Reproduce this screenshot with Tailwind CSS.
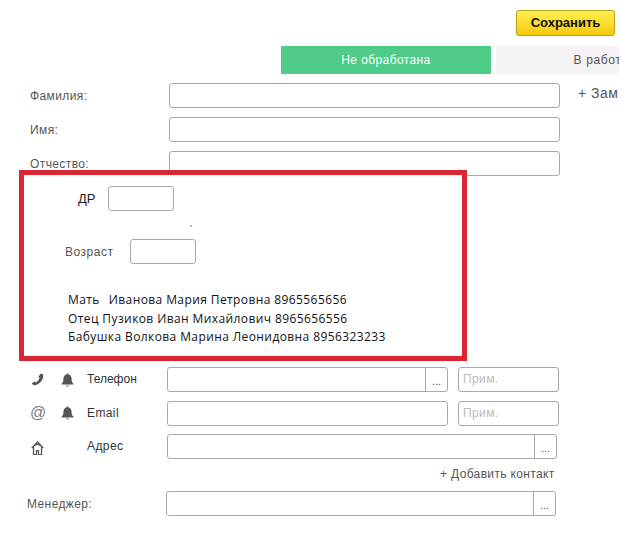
<!DOCTYPE html>
<html lang="ru">
<head>
    <meta charset="UTF-8">
    <title>Карточка клиента</title>
    <script src="https://cdn.jsdelivr.net/npm/@tailwindcss/browser@4"></script>
</head>
<body class="bg-white">
    <div class="w-[622px] h-[537px] overflow-hidden font-['Liberation_Sans',sans-serif] text-[12px] text-[#555]">
        <!-- Save -->
        <div class="pt-[10px] pl-[516px]">
            <button class="w-[99px] h-[26px] rounded-[3px] border border-[#b9a21a] bg-gradient-to-b from-[#fff04a] to-[#f6c800] text-[13px] font-bold text-[#111]">Сохранить</button>
        </div>

        <!-- Status tabs -->
        <div class="flex w-[619px] mt-[10px] pl-[281px] gap-[5px] overflow-hidden">
            <div class="w-[210px] h-[28px] shrink-0 bg-[#4dcb87] text-white flex items-center justify-center tracking-[0.4px]">Не обработана</div>
            <div class="w-[210px] h-[28px] shrink-0 bg-[#f6f3f6] flex items-center justify-center tracking-[0.6px]">В работе</div>
        </div>

        <!-- Name fields -->
        <div class="flex flex-col gap-[9px] w-[619px] mt-[9px] overflow-hidden">
            <div class="flex items-center h-[25px] pl-[30px]">
                <span class="w-[139px] shrink-0 tracking-[0.4px]">Фамилия:</span>
                <div class="w-[391px] h-[25px] shrink-0 rounded-[3px] border border-[#a9a9a9]"></div>
                <span class="ml-[18px] shrink-0 text-[14px] tracking-[0.5px] -mt-[5px]">+ Заметка</span>
            </div>
            <div class="flex items-center h-[25px] pl-[30px]">
                <span class="w-[139px] shrink-0 tracking-[0.4px]">Имя:</span>
                <div class="w-[391px] h-[25px] rounded-[3px] border border-[#a9a9a9]"></div>
            </div>
            <div class="flex items-center h-[25px] pl-[30px]">
                <span class="w-[139px] shrink-0 tracking-[0.4px]">Отчество:</span>
                <div class="w-[391px] h-[25px] rounded-[3px] border border-[#a9a9a9]"></div>
            </div>
        </div>

        <!-- Highlighted block -->
        <div class="relative -mt-[6px] ml-[19px] w-[448px] h-[191px] border-[5px] border-[#dc2533] bg-white">
            <div class="flex items-center h-[25px] mt-[11px] pl-[54px]">
                <span class="w-[30px] text-[13px] text-[#222]">ДР</span>
                <div class="w-[66px] h-[25px] rounded-[3px] border border-[#a9a9a9]"></div>
            </div>
            <div class="ml-[166px] mt-[14px] w-[2px] h-[2px] bg-[#bbb]"></div>
            <div class="flex items-center h-[25px] mt-[12px] pl-[41px]">
                <span class="w-[65px] tracking-[0.5px]">Возраст</span>
                <div class="w-[66px] h-[25px] rounded-[3px] border border-[#a9a9a9]"></div>
            </div>
            <div class="mt-[27px] pl-[44px] font-['Open_Sans',sans-serif] text-[12px] tracking-[0.4px] leading-[18.500px] text-[#111]">
                <p>Мать<span class="ml-[9px]">Иванова Мария Петровна 8965565656</span></p>
                <p>Отец Пузиков Иван Михайлович 8965656556</p>
                <p>Бабушка Волкова Марина Леонидовна 8956323233</p>
            </div>
        </div>

        <!-- Contacts -->
        <div class="flex flex-col gap-[8.5px] mt-[6px]">
            <div class="flex items-center h-[25px] pl-[31px]">
                <svg class="w-[13px] h-[13px] shrink-0" viewBox="0 0 24 24" fill="#555"><path d="M20.5 1.5c1.5 1 2.4 2.2 2.2 4-.6 8.500-7.700 15.800-16 17-1.800.2-3.500-.5-4.700-2-.5-.6-.4-1.300.2-1.800l3.300-2.600c.6-.4 1.200-.4 1.700.1l1.500 1.500c3.300-1.800 6-5 7.300-8.300l-1.600-1.300c-.6-.5-.7-1.100-.3-1.800l2.800-3.900c.7-.7 1.600-1 2.600-.9z"/></svg>
                <svg class="w-[13px] h-[14px] ml-[17px] shrink-0" viewBox="0 0 24 26" fill="#555"><path d="M12 1c1 0 1.800.7 1.800 1.700 4 .8 5.700 4 5.700 8 0 4.500 1 7 3.500 9.300v1.500H1V20c2.500-2.300 3.500-4.800 3.500-9.300 0-4 1.700-7.200 5.700-8C10.200 1.700 11 1 12 1zM9.500 23h5c-.2 1.300-1.200 2.200-2.500 2.200S9.700 24.300 9.500 23z"/></svg>
                <span class="ml-[13px] w-[80px] -mt-[2px] text-[#333]">Телефон</span>
                <div class="flex w-[281px] h-[25px] rounded-[3px] border border-[#a9a9a9]">
                    <div class="flex-1 border-r border-[#a9a9a9]"></div>
                    <div class="w-[21px] text-center leading-[26px] text-[11px]">...</div>
                </div>
                <div class="ml-[10px] w-[101px] h-[25px] pl-[4px] rounded-[3px] border border-[#a9a9a9] text-[#bbb] leading-[23px] tracking-[0.4px]">Прим.</div>
            </div>
            <div class="flex items-center h-[25px] pl-[30px]">
                <span class="w-[16px] shrink-0 -mt-[1px] text-[16px] leading-none text-[#777]">@</span>
                <svg class="w-[13px] h-[14px] ml-[15px] shrink-0" viewBox="0 0 24 26" fill="#555"><path d="M12 1c1 0 1.800.7 1.800 1.700 4 .8 5.700 4 5.700 8 0 4.500 1 7 3.500 9.300v1.500H1V20c2.500-2.300 3.500-4.800 3.500-9.300 0-4 1.700-7.200 5.700-8C10.200 1.700 11 1 12 1zM9.500 23h5c-.2 1.300-1.200 2.200-2.500 2.200S9.700 24.300 9.500 23z"/></svg>
                <span class="ml-[13px] w-[80px] -mt-[1px] tracking-[0.4px] text-[#333]">Email</span>
                <div class="w-[281px] h-[25px] rounded-[3px] border border-[#a9a9a9]"></div>
                <div class="ml-[10px] w-[101px] h-[25px] pl-[4px] rounded-[3px] border border-[#a9a9a9] text-[#bbb] leading-[23px] tracking-[0.4px]">Прим.</div>
            </div>
            <div class="flex items-center h-[25px] pl-[31px]">
                <svg class="w-[13px] h-[14px] shrink-0 mt-[3px]" viewBox="0 0 26 28" fill="none" stroke="#555" stroke-width="2.500"><path d="M1.500 14 13 2 24.500 14M6 9.500 13 6.500l7 3M5 11.500V27h6v-8h4v8h6V11.500"/></svg>
                <span class="ml-[43px] w-[80px] -mt-[1px] tracking-[0.4px] text-[#333]">Адрес</span>
                <div class="flex w-[390px] h-[25px] rounded-[3px] border border-[#a9a9a9]">
                    <div class="flex-1 border-r border-[#a9a9a9]"></div>
                    <div class="w-[21px] text-center leading-[26px] text-[11px]">...</div>
                </div>
            </div>
        </div>

        <div class="mt-[7px] pl-[440px] h-[16px] leading-[16px] tracking-[0.35px]">+ Добавить контакт</div>

        <div class="flex items-center h-[25px] mt-[9px] pl-[27px]">
            <span class="w-[139px] shrink-0 tracking-[0.4px]">Менеджер:</span>
            <div class="flex w-[390px] h-[25px] rounded-[3px] border border-[#a9a9a9]">
                <div class="flex-1 border-r border-[#a9a9a9]"></div>
                <div class="w-[21px] text-center leading-[26px] text-[11px]">...</div>
            </div>
        </div>
    </div>
</body>
</html>
